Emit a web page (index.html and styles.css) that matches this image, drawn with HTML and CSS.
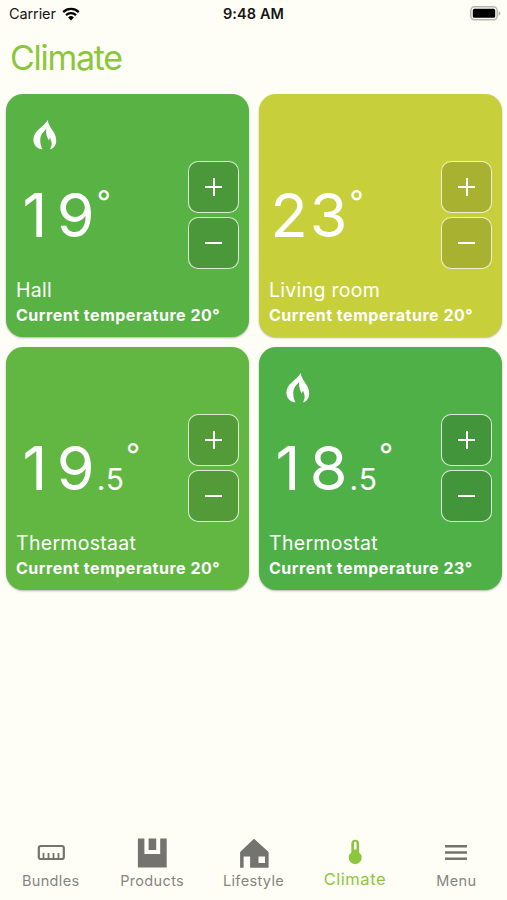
FILE: index.html
```html
<!DOCTYPE html>
<html lang="en">
<head>
    <meta charset="UTF-8">
    <meta name="viewport" content="width=device-width, initial-scale=1.0">
    <title>Climate</title>
    <link rel="stylesheet" href="styles.css">
</head>
<body>
    <div class="app">
        <header class="status-bar">
            <div class="carrier">
                <span>Carrier</span>
                <svg class="wifi" viewBox="0 0 18 14" width="18" height="14">
                    <path d="M1.2 5.1a11.2 11.2 0 0 1 15.6 0" fill="none" stroke="#000" stroke-width="2.3"/>
                    <path d="M4 8.1a7.1 7.1 0 0 1 10 0" fill="none" stroke="#000" stroke-width="2.2"/>
                    <path d="M9 13.6L6.1 10.5a4.2 4.2 0 0 1 5.8 0z" fill="#000"/>
                </svg>
            </div>
            <div class="time">9:48 AM</div>
            <div class="battery">
                <svg viewBox="0 0 31 15" width="31" height="15">
                    <rect x=".8" y=".8" width="26.4" height="13" rx="3.8" fill="none" stroke="#b5b5ae" stroke-width="1.5"/>
                    <rect x="2.8" y="2.8" width="22.4" height="9" rx="1.6" fill="#000"/>
                    <path d="M28.6 5v4.8q1.9-.8 1.9-2.4T28.6 5z" fill="#b5b5ae"/>
                </svg>
            </div>
        </header>

        <h1>Climate</h1>

        <main class="rooms">
            <div class="room hall">
                <div class="heating">
                    <svg viewBox="0 0 24 30" width="24" height="30"><path d="M14.8 0C15.2 7.5 23.2 11.5 23.2 20.5C23.2 25 20.8 28.6 17 29.3C18.6 26.6 19 23.8 18.4 21.6C18 20.2 17.4 19.2 17.2 17.8C16.6 18.6 16 19.4 15.8 20.4C14 17.5 12.6 14 13.2 9C9.2 12.5 7.2 16 7.2 20C7.2 24 8.2 26.5 9.4 29.5C4 28.8 .4 25 .4 19.5C.4 10.5 10.5 7.5 14.8 0z" fill="#fff"/></svg>
                </div>
                <div class="control">
                    <div class="temp"><span class="one">1</span>9<span class="degree">°</span></div>
                    <div class="buttons">
                        <button class="plus" aria-label="Warmer"></button>
                        <button class="minus" aria-label="Cooler"></button>
                    </div>
                </div>
                <h2>Hall</h2>
                <p>Current temperature 20°</p>
            </div>
            <div class="room living">
                <div class="heating"></div>
                <div class="control">
                    <div class="temp">23<span class="degree">°</span></div>
                    <div class="buttons">
                        <button class="plus" aria-label="Warmer"></button>
                        <button class="minus" aria-label="Cooler"></button>
                    </div>
                </div>
                <h2>Living room</h2>
                <p>Current temperature 20°</p>
            </div>
            <div class="room thermostaat">
                <div class="heating"></div>
                <div class="control">
                    <div class="temp"><span class="one">1</span>9<span class="decimal">.5</span><span class="degree">°</span></div>
                    <div class="buttons">
                        <button class="plus" aria-label="Warmer"></button>
                        <button class="minus" aria-label="Cooler"></button>
                    </div>
                </div>
                <h2>Thermostaat</h2>
                <p>Current temperature 20°</p>
            </div>
            <div class="room thermostat">
                <div class="heating">
                    <svg viewBox="0 0 24 30" width="24" height="30"><path d="M14.8 0C15.2 7.5 23.2 11.5 23.2 20.5C23.2 25 20.8 28.6 17 29.3C18.6 26.6 19 23.8 18.4 21.6C18 20.2 17.4 19.2 17.2 17.8C16.6 18.6 16 19.4 15.8 20.4C14 17.5 12.6 14 13.2 9C9.2 12.5 7.2 16 7.2 20C7.2 24 8.2 26.5 9.4 29.5C4 28.8 .4 25 .4 19.5C.4 10.5 10.5 7.5 14.8 0z" fill="#fff"/></svg>
                </div>
                <div class="control">
                    <div class="temp"><span class="one">1</span>8<span class="decimal">.5</span><span class="degree">°</span></div>
                    <div class="buttons">
                        <button class="plus" aria-label="Warmer"></button>
                        <button class="minus" aria-label="Cooler"></button>
                    </div>
                </div>
                <h2>Thermostat</h2>
                <p>Current temperature 23°</p>
            </div>
        </main>

        <nav class="tabs">
            <a class="tab">
                <svg viewBox="0 0 30 30" width="30" height="30">
                    <rect x="2.8" y="8" width="25" height="13" rx="2" fill="none" stroke="#73736f" stroke-width="2.2"/>
                    <path d="M7.5 15v6M12.5 15v6M17.5 15v6M22.5 15v6" stroke="#73736f" stroke-width="1.8"/>
                </svg>
                <span>Bundles</span>
            </a>
            <a class="tab">
                <svg viewBox="0 0 30 30" width="30" height="30">
                    <path d="M.9.5h6.5V16h15.8V.5h6.5v29H.9z" fill="#73736f"/>
                    <rect x="11.6" y=".5" width="7.6" height="11.5" fill="#73736f"/>
                </svg>
                <span>Products</span>
            </a>
            <a class="tab">
                <svg viewBox="0 0 30 30" width="30" height="30">
                    <path fill-rule="evenodd" d="M15 .8L29.6 14v15.7H11.1V18.5H4.6v11.2H1.1V14zM19.5 18.5V25H26v-6.5z" fill="#73736f"/>
                </svg>
                <span>Lifestyle</span>
            </a>
            <a class="tab active">
                <svg viewBox="0 0 30 30" width="30" height="30">
                    <path fill-rule="evenodd" d="M11.3 5.7a3.9 3.9 0 0 1 7.8 0v8.8a6.5 6.5 0 1 1-7.8 0zM14 5v6.5h2.5V5a1.25 1.25 0 0 0-2.5 0z" fill="#8cc63f"/>
                </svg>
                <span>Climate</span>
            </a>
            <a class="tab">
                <svg viewBox="0 0 30 30" width="30" height="30">
                    <path d="M4 8.2h22M4 14.5h22M4 20.7h22" stroke="#73736f" stroke-width="2.4"/>
                </svg>
                <span>Menu</span>
            </a>
        </nav>
    </div>
</body>
</html>
```
FILE: styles.css
```css
:root {
    --background-color: #fffef6;
    --primary-color: #8cc63f;
    --tab-color: #858580;
}

* {
    margin: 0;
    padding: 0;
    box-sizing: border-box;
}

body {
    font-family: Inter, 'Liberation Sans', sans-serif;
    background: var(--background-color);
}

.app {
    display: flex;
    flex-direction: column;
    height: 900px;
    overflow: hidden;
}

.status-bar {
    display: flex;
    align-items: center;
    height: 27px;
    padding: 0 6px 0 9px;
    color: #151515;
    font-size: 14.5px;
}

.carrier,
.battery {
    display: flex;
    flex: 1;
    align-items: center;
    gap: 6px;
    letter-spacing: -0.1px;
}

.battery {
    justify-content: flex-end;
}

.time {
    margin-right: 3px;
    font-weight: 600;
    letter-spacing: 0.1px;
}

h1 {
    height: 67px;
    padding-left: 10px;
    color: var(--primary-color);
    font-size: 34px;
    font-weight: 400;
    line-height: 62px;
    letter-spacing: -1.3px;
}

.rooms {
    display: grid;
    grid-template-columns: 243px 243px;
    gap: 10px;
    padding-left: 6px;
}

.room {
    height: 243px;
    padding: 0 10px;
    border-radius: 17px;
    color: #fff;
    box-shadow: 0 1px 2px rgba(0,0,0,0.3);
}

.hall { background: #58b344; }
.living { background: #c7d03a; }
.thermostaat { background: #62b743; }
.thermostat { background: #4fb047; }

.heating {
    height: 67px;
    padding: 26px 0 0 17px;
}

.control {
    display: flex;
    justify-content: space-between;
    height: 108px;
}

.temp {
    padding-left: 1.5px;
    font-size: 61px;
    line-height: 108px;
    letter-spacing: 2px;
    white-space: nowrap;
}

/* keeps the narrow 1 as wide as the other digits */
.one {
    margin: 0 7.5px 0 5px;
}

.decimal {
    font-size: 30px;
    letter-spacing: 1px;
}

.degree {
    font-size: 31px;
    line-height: 0;
    vertical-align: 24px;
}

.decimal + .degree {
    margin-left: 1px;
}

.buttons {
    display: flex;
    flex-direction: column;
    gap: 4px;
}

button {
    display: flex;
    align-items: center;
    justify-content: center;
    width: 51px;
    height: 52px;
    border: 1px solid rgba(255,255,255,0.8);
    border-radius: 10px;
    background: rgba(0,0,0,0.15);
}

.plus::before,
.minus::before {
    content: '';
    width: 17px;
    height: 18px;
    background: linear-gradient(#fff, #fff) center / 17px 2px no-repeat;
}

.plus::before {
    background: linear-gradient(#fff, #fff) center / 17px 2px no-repeat,
                linear-gradient(#fff, #fff) center / 2px 18px no-repeat;
}

.room h2 {
    margin-top: 9px;
    font-size: 19.5px;
    font-weight: 400;
    line-height: 24px;
    letter-spacing: 0.3px;
}

.room p {
    margin-top: 1px;
    font-size: 16px;
    font-weight: 700;
    line-height: 24px;
    letter-spacing: 0.52px;
}

.tabs {
    display: flex;
    margin-top: auto;
    height: 62px;
}

.tab {
    display: flex;
    flex: 1;
    flex-direction: column;
    align-items: center;
    color: var(--tab-color);
    font-size: 14.5px;
    line-height: 18px;
    letter-spacing: 0.35px;
}

.tab span {
    margin-top: 4px;
}

.tab.active {
    color: var(--primary-color);
    font-size: 16.5px;
    letter-spacing: 0.55px;
}

.tab.active span {
    margin-top: 2px;
}
```
